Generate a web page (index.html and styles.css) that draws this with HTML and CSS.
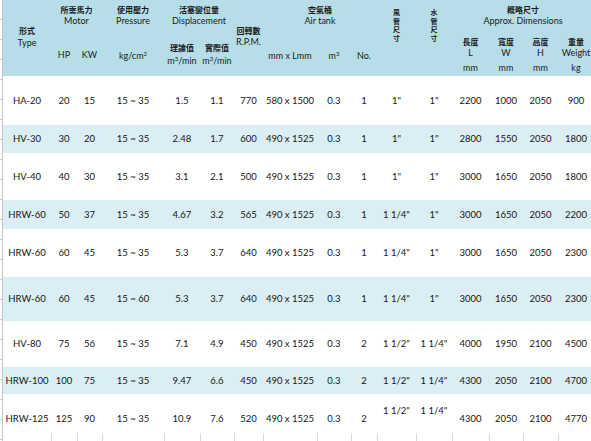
FILE: index.html
```html
<!DOCTYPE html>
<html lang="zh-Hant">
<head>
<meta charset="utf-8">
<title>Air compressor specifications</title>
<link rel="stylesheet" href="styles.css">
</head>
<body>
<div class="gutter"></div>
<div class="sheet">
  <div class="head">
    <div class="h-type"><span class="zh">形式</span><span>Type</span></div>
    <div class="h-title c2"><span class="zh">所需馬力</span><span>Motor</span></div>
    <div class="h-sub c2s pt22"><span>HP</span></div>
    <div class="h-sub c3s pt22"><span>KW</span></div>
    <div class="h-title c4"><span class="zh">使用壓力</span><span>Pressure</span></div>
    <div class="h-sub c4s pt23"><span>kg/cm<sup>2</sup></span></div>
    <div class="h-title c5"><span class="zh">活塞變位量</span><span>Displacement</span></div>
    <div class="h-sub c5s pt14 lh13"><span class="zh">理論值</span><span>m<sup>3</sup>/min</span></div>
    <div class="h-sub c6s pt14 lh13"><span class="zh">實際值</span><span>m<sup>3</sup>/min</span></div>
    <div class="h-rpm"><span class="zh">回轉數</span><span>R.P.M.</span></div>
    <div class="h-title c8"><span class="zh">空氣桶</span><span>Air tank</span></div>
    <div class="h-sub c8s pt23"><span>mm x Lmm</span></div>
    <div class="h-sub c9s pt23"><span>m<sup>3</sup></span></div>
    <div class="h-sub c10s pt23"><span>No.</span></div>
    <div class="h-vert c11"><span class="zh ch">風</span><span class="zh ch">管</span><span class="zh ch">尺</span><span class="zh ch">寸</span></div>
    <div class="h-vert c12"><span class="zh ch">水</span><span class="zh ch">管</span><span class="zh ch">尺</span><span class="zh ch">寸</span></div>
    <div class="h-title c13"><span class="zh">概略尺寸</span><span>Approx. Dimensions</span></div>
    <div class="h-sub c13s h-dim"><span class="zh">長度</span><span>L</span><span class="unit">mm</span></div>
    <div class="h-sub c14s h-dim"><span class="zh">寬度</span><span>W</span><span class="unit">mm</span></div>
    <div class="h-sub c15s h-dim"><span class="zh">高度</span><span>H</span><span class="unit">mm</span></div>
    <div class="h-sub c16s h-dim"><span class="zh">重量</span><span>Weight</span><span class="unit">kg</span></div>
  </div>

  <div class="row r1"><span>HA-20</span><span>20</span><span>15</span><span>15 ~ 35</span><span>1.5</span><span>1.1</span><span>770</span><span>580 x 1500</span><span>0.3</span><span>1</span><span>1"</span><span>1"</span><span>2200</span><span>1000</span><span>2050</span><span>900</span></div>
  <div class="row r2 band"><span>HV-30</span><span>30</span><span>20</span><span>15 ~ 35</span><span>2.48</span><span>1.7</span><span>600</span><span>490 x 1525</span><span>0.3</span><span>1</span><span>1"</span><span>1"</span><span>2800</span><span>1550</span><span>2050</span><span>1800</span></div>
  <div class="row r3"><span>HV-40</span><span>40</span><span>30</span><span>15 ~ 35</span><span>3.1</span><span>2.1</span><span>500</span><span>490 x 1525</span><span>0.3</span><span>1</span><span>1"</span><span>1"</span><span>3000</span><span>1650</span><span>2050</span><span>1800</span></div>
  <div class="row r4 band"><span>HRW-60</span><span>50</span><span>37</span><span>15 ~ 35</span><span>4.67</span><span>3.2</span><span>565</span><span>490 x 1525</span><span>0.3</span><span>1</span><span>1 1/4"</span><span>1"</span><span>3000</span><span>1650</span><span>2050</span><span>2200</span></div>
  <div class="row r5"><span>HRW-60</span><span>60</span><span>45</span><span>15 ~ 35</span><span>5.3</span><span>3.7</span><span>640</span><span>490 x 1525</span><span>0.3</span><span>1</span><span>1 1/4"</span><span>1"</span><span>3000</span><span>1650</span><span>2050</span><span>2300</span></div>
  <div class="row r6 band"><span>HRW-60</span><span>60</span><span>45</span><span>15 ~ 60</span><span>5.3</span><span>3.7</span><span>640</span><span>490 x 1525</span><span>0.3</span><span>1</span><span>1 1/4"</span><span>1"</span><span>3000</span><span>1650</span><span>2050</span><span>2300</span></div>
  <div class="row r7"><span>HV-80</span><span>75</span><span>56</span><span>15 ~ 35</span><span>7.1</span><span>4.9</span><span>450</span><span>490 x 1525</span><span>0.3</span><span>2</span><span>1 1/2"</span><span>1 1/4"</span><span>4000</span><span>1950</span><span>2100</span><span>4500</span></div>
  <div class="row r8 band"><span>HRW-100</span><span>100</span><span>75</span><span>15 ~ 35</span><span>9.47</span><span>6.6</span><span>450</span><span>490 x 1525</span><span>0.3</span><span>2</span><span>1 1/2"</span><span>1 1/4"</span><span>4300</span><span>2050</span><span>2100</span><span>4700</span></div>
  <div class="row r9"><span>HRW-125</span><span>125</span><span>90</span><span>15 ~ 35</span><span>10.9</span><span>7.6</span><span>520</span><span>490 x 1525</span><span>0.3</span><span>2</span><span class="top">1 1/2"</span><span class="top">1 1/4"</span><span>4300</span><span>2050</span><span>2100</span><span>4770</span></div>
  <div class="row grid-row"><span></span><span></span><span></span><span></span><span></span><span></span><span></span><span></span><span></span><span></span><span></span><span></span><span></span><span></span><span></span><span></span></div>
</div>
</body>
</html>
```

FILE: styles.css
```css
html, body {
  margin: 0;
  padding: 0;
  background: #ffffff;
  overflow: hidden;
}
body {
  display: flex;
  width: 591px;
  height: 441px;
  font-family: "Lato", "Noto Sans CJK TC", sans-serif;
  color: #161616;
}
.gutter {
  flex: 0 0 2px;
  border-right: 1px solid #c4c4c4;
  background: repeating-linear-gradient(180deg, #ffffff 0, #ffffff 19px, #cfcfcf 19px, #cfcfcf 20px);
}
.sheet {
  flex: 0 0 591px;
  display: flex;
  flex-direction: column;
}
.sheet > div {
  flex-shrink: 0;
}
.head, .row {
  display: grid;
  grid-template-columns: 48px 26px 25px 62px 36px 34px 29px 54px 34px 26px 39px 36px 37px 34px 35px 36px;
}
.head {
  background: #b7dee8;
  height: 76px;
  grid-template-rows: 27px 49px;
  font-size: 9px;
  color: #1a1a1a;
}
.head > div {
  display: flex;
  flex-direction: column;
  align-items: center;
  text-align: center;
  white-space: nowrap;
  line-height: 11px;
}
.zh {
  font-family: "Noto Sans CJK TC", sans-serif;
  font-size: 8px;
  font-weight: 700;
}
sup {
  font-size: 6px;
  line-height: 0;
  vertical-align: 3px;
}
.h-type { grid-column: 1; grid-row: 1 / 3; padding-top: 25px; }
.head > .h-type { line-height: 12px; }
.h-title { grid-row: 1; padding-top: 4px; }
.c2 { grid-column: 2 / 4; }
.c4 { grid-column: 4; }
.c5 { grid-column: 5 / 7; }
.c8 { grid-column: 8 / 11; }
.c13 { grid-column: 13 / 17; }
.h-sub { grid-row: 2; }
.c2s { grid-column: 2; }
.c3s { grid-column: 3; }
.c4s { grid-column: 4; }
.c5s { grid-column: 5; }
.c6s { grid-column: 6; }
.c8s { grid-column: 8; }
.c9s { grid-column: 9; }
.c10s { grid-column: 10; }
.c13s { grid-column: 13; }
.c14s { grid-column: 14; }
.c15s { grid-column: 15; }
.c16s { grid-column: 16; }
.head > .pt22 { padding-top: 22px; line-height: 12px; }
.head > .pt23 { padding-top: 23px; line-height: 12px; }
.head > .pt14 { padding-top: 14px; line-height: 13px; }
.h-rpm { grid-column: 7; grid-row: 1 / 3; padding-top: 25px; }
.h-vert { grid-row: 1 / 3; padding-top: 8px; }
.h-vert .ch {
  display: block;
  font-size: 7px;
  height: 8.7px;
  line-height: 8.7px;
}
.c11 { grid-column: 11; }
.c12 { grid-column: 12; }
.head > .h-dim { padding-top: 10px; line-height: 10.5px; }
.h-dim .unit { margin-top: 5px; }

.row {
  align-items: center;
  font-size: 9.5px;
}
.row > span {
  text-align: center;
  white-space: nowrap;
  line-height: 12px;
}
.band { background: #daeef3; }
.r1 { height: 49px; }
.r2 { height: 28px; }
.r3 { height: 47px; }
.r4 { height: 29px; }
.r5 { height: 48px; }
.r6 { height: 44px; }
.r7 { height: 46px; }
.r8 { height: 27px; }
.r9 { height: 28px; padding-top: 11px; }
.r9 > .top { align-self: start; }
.grid-row {
  height: 20px;
  align-items: stretch;
}
.grid-row > span {
  border-right: 1px solid #d9d9d9;
  margin-right: -1px;
}
```
